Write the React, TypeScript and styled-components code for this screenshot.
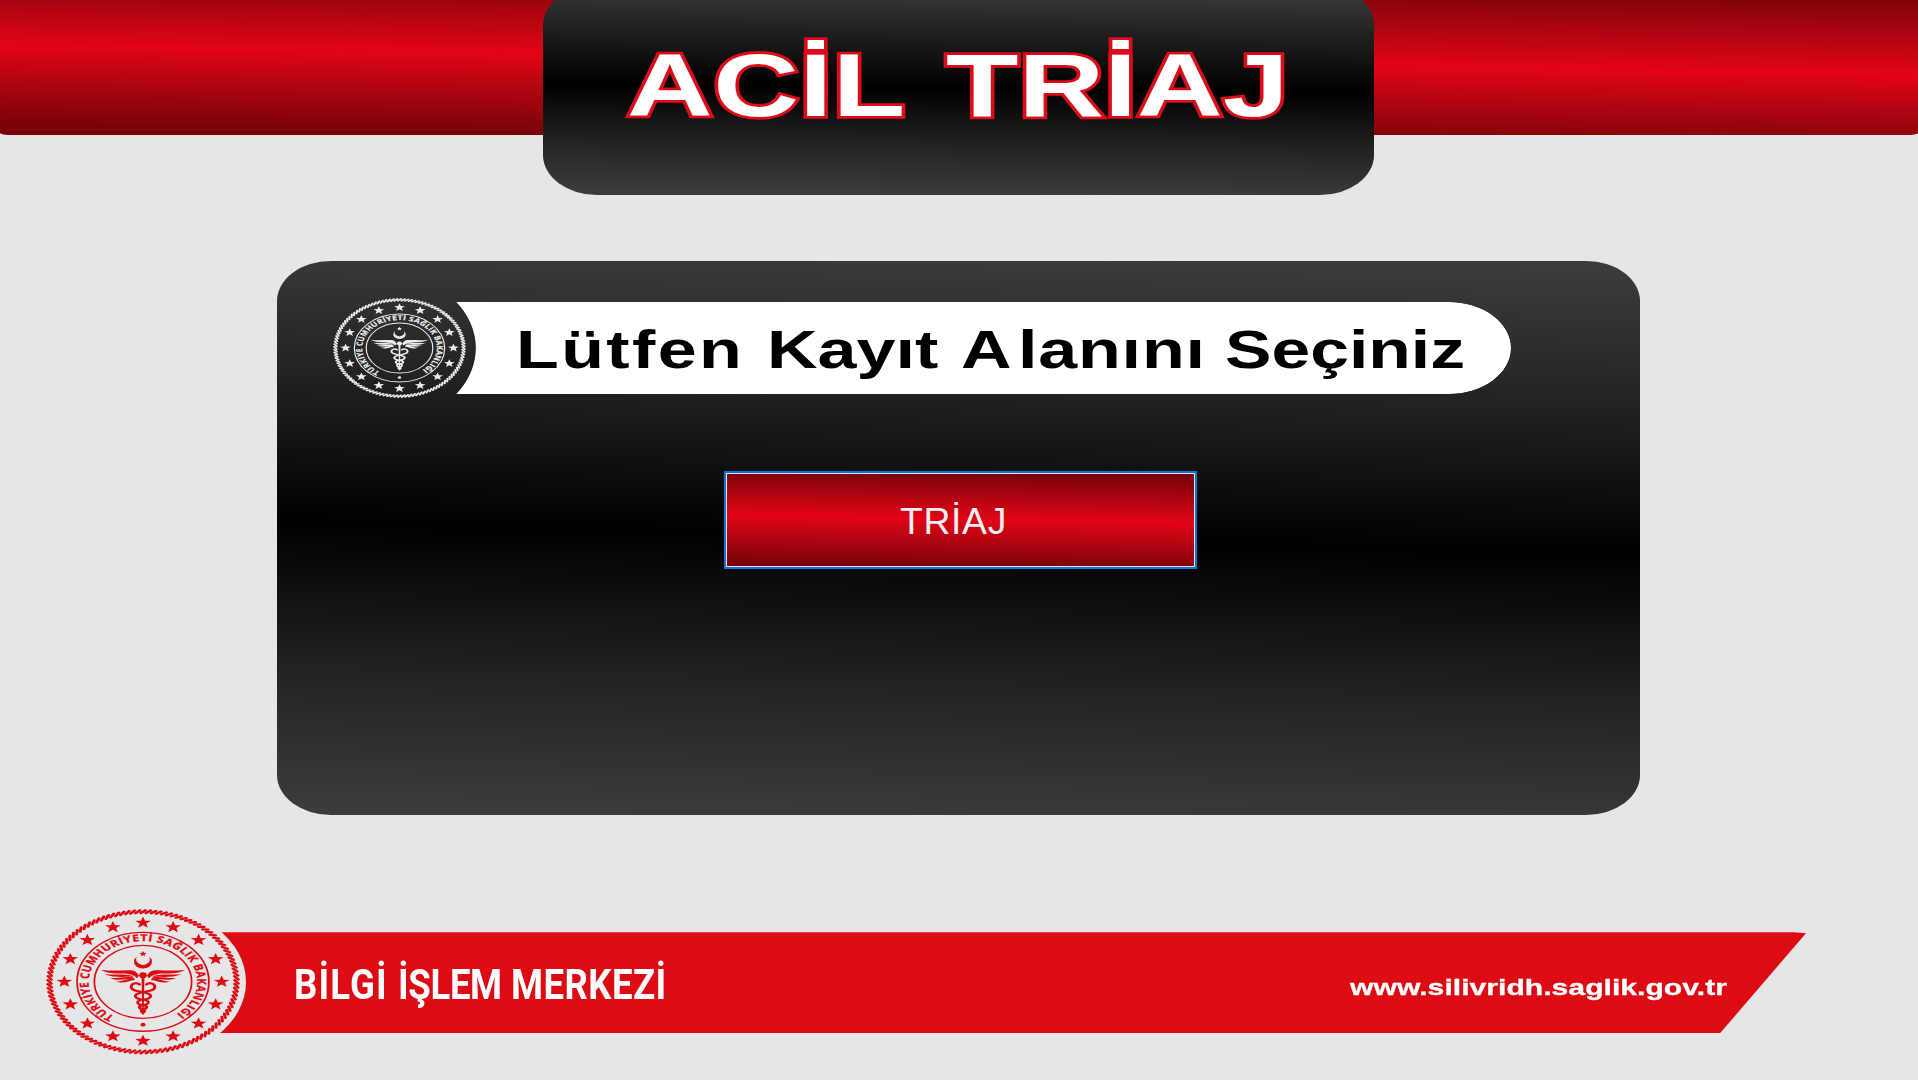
import React from "react";
import styled, { createGlobalStyle } from "styled-components";

const GlobalStyle = createGlobalStyle`
  html, body, #root { height: 100%; }
  body {
    margin: 0;
    overflow: hidden;
    background: #e6e6e6;
    font-family: "Liberation Sans", Arial, sans-serif;
  }
`;

const Screen = styled.div`
  display: flex;
  flex-direction: column;
  align-items: stretch;
  width: 1918px;
  height: 1080px;
  background: #e6e6e6;
`;

const Header = styled.header`
  display: flex;
  justify-content: center;
  align-items: flex-start;
  height: 134.5px;
  flex: none;
  padding-right: 1px;
  box-sizing: border-box;
  border-radius: 0 0 12px 12px / 0 0 2px 2px;
  background: linear-gradient(180.87deg, #7b0307 -3.5px, #ac0510 34px, #e20417 74.5px, #ac0510 113px, #7b0307 152px);
`;

const TitlePlate = styled.div`
  flex: none;
  box-sizing: border-box;
  width: 830.5px;
  height: 210px;
  margin-top: -15px;
  padding: 51px 0 0 84px;
  border-radius: 54px / 40px;
  background: linear-gradient(180.65deg, #3b3b3b 3%, #222 22%, #000 49%, #222 75%, #3b3b3b 97%);
`;

const Title = styled.h1`
  display: grid;
  grid-template-columns: 318.5px auto;
  margin: 0;
  font-size: 88.5px;
  line-height: 100px;
  font-weight: 700;
  color: #fff;
  -webkit-text-stroke: 5.6px #dc0c18;
  paint-order: stroke fill;
  stroke-linejoin: round;
`;

const Main = styled.main`
  display: flex;
  flex-direction: column;
  align-items: flex-start;
  box-sizing: border-box;
  width: 1363px;
  height: 554px;
  flex: none;
  margin: 126.5px 0 0 277px;
  padding: 37px 0 0 56.4px;
  border-radius: 54px / 40px;
  background: linear-gradient(181.4deg, #3b3b3b 2%, #222 25%, #000 50%, #222 75%, #3b3b3b 98%);
`;

const PromptRow = styled.div`
  display: flex;
  align-items: center;
  height: 100px;
`;

const PromptPill = styled.div`
  box-sizing: border-box;
  width: 1059px;
  height: 92.4px;
  margin-left: -14px;
  padding: 18.4px 0 0 64px;
  background: #fff;
  border-radius: 0 62px 62px 0 / 0 46px 46px 0;
  mask-image: radial-gradient(107px 80px at -83px 50%, transparent 99.4%, #000 100.2%);
`;

const Prompt = styled.h2`
  display: grid;
  grid-template-columns: 251px 193.5px 57px 207.5px auto;
  margin: 0;
  font-size: 53.5px;
  line-height: 60px;
  font-weight: 700;
  color: #000;
`;

const Word = styled.span<{ $stretch: number; $spacing?: number }>`
  display: block;
  width: 0;
  white-space: nowrap;
  letter-spacing: ${(p) => p.$spacing ?? 0}px;
  transform: scaleX(${(p) => p.$stretch});
  transform-origin: 0 0;
`;

const TriageButton = styled.button`
  box-sizing: border-box;
  width: 473px;
  height: 98px;
  margin: 73px 0 0 390.6px;
  padding: 1px 14px 0 0;
  border: 2px solid #0078d7;
  border-radius: 0;
  box-shadow: inset 0 0 0 1px #e8dede;
  background: linear-gradient(181deg, #7b0307 5%, #ac0510 26%, #e20417 49%, #ac0510 73%, #7b0307 95%);
  color: #f0f0f0;
  font: 400 37.33px/46px "Liberation Sans", Arial, sans-serif;
  letter-spacing: 0.7px;
  text-align: center;
`;

const Footer = styled.footer`
  display: flex;
  align-items: center;
  height: 154px;
  flex: none;
  margin: 90px 0 0 39.7px;
`;

const Seal = styled.div`
  position: relative;
  z-index: 1;
  display: flex;
  align-items: center;
  justify-content: center;
  flex: none;
  width: 206px;
  height: 154px;
  border-radius: 50%;
  background: #e6e6e6;
`;

const FooterBar = styled.div`
  display: flex;
  align-items: flex-start;
  box-sizing: border-box;
  width: 1626px;
  height: 101px;
  margin: 1.6px 0 0 -65.7px;
  padding-left: 114px;
  background: #dd0b13;
  clip-path: polygon(0 0, calc(100% - 12px) 0, 100% 1px, calc(100% - 86px) 100%, 0 100%);
`;

const Department = styled.div`
  display: grid;
  grid-template-columns: 103.5px 113px auto;
  width: 1056px;
  padding-top: 28px;
  font-family: Roboto, sans-serif;
  font-size: 42px;
  line-height: 50px;
  font-weight: 700;
  color: #fff;
`;

const Website = styled.div`
  padding-top: 41px;
  font-size: 22.5px;
  line-height: 30px;
  font-weight: 700;
  color: #fff;
  -webkit-text-stroke: 0.3px #fff;
`;

const starPoints = (r: number) =>
  Array.from({ length: 10 }, (_, i) => {
    const a = (Math.PI / 5) * i - Math.PI / 2;
    const d = i % 2 ? r * 0.42 : r;
    return `${(Math.cos(a) * d).toFixed(2)},${(Math.sin(a) * d).toFixed(2)}`;
  }).join(" ");

const ROPE_STRANDS = 112;

function Emblem({ color, width, height, id }: { color: string; width: number; height: number; id: string }) {
  return (
    <svg width={width} height={height} viewBox="-73 -73 146 146" preserveAspectRatio="none" style={{ flex: "none" }}>
      <defs>
        <path id={id} d="M -21.5 34.8 A 40.9 40.9 0 1 1 21.5 34.8" />
      </defs>
      <g fill="none" stroke={color}>
        <g strokeWidth="2.3" strokeLinecap="round">
          {Array.from({ length: ROPE_STRANDS }, (_, i) => (
            <path key={i} d="M -1.7 -69 L 1.7 -71.7" transform={`rotate(${(360 / ROPE_STRANDS) * i})`} />
          ))}
        </g>
        <circle r="49.6" strokeWidth="1.3" />
        <circle r="36.6" strokeWidth="1.3" />
      </g>
      <g fill={color}>
        {Array.from({ length: 16 }, (_, i) => {
          const a = (Math.PI / 8) * i;
          return (
            <polygon
              key={i}
              points={starPoints(6.2)}
              transform={`translate(${(Math.sin(a) * 59.2).toFixed(2)} ${(-Math.cos(a) * 59.2).toFixed(2)})`}
            />
          );
        })}
        <text
          fontFamily='"Open Sans", "Noto Sans", sans-serif'
          fontWeight="700"
          fontSize="9.4"
          stroke={color}
          strokeWidth="0.25"
        >
          <textPath href={`#${id}`} textLength="207" lengthAdjust="spacing">
            TÜRKİYE CUMHURİYETİ SAĞLIK BAKANLIĞI
          </textPath>
        </text>
        <circle cy="43" r="1.9" />
        <polygon points={starPoints(3)} transform="translate(0 -28)" />
        {/* crescent */}
        <path d="M -4.3 -25.3 A 6.8 6.8 0 1 0 4.3 -25.3 A 5.2 5.2 0 1 1 -4.3 -25.3 Z" />
        <circle cy="-6.6" r="2.9" />
        {/* wings */}
        {[1, -1].map((s) => (
          <g key={s} transform={`scale(${s} 1)`}>
            <path d="M -31.8 -12.2 C -24 -10.6 -17 -11.9 -9 -11.6 C -6 -11.4 -4.5 -9.5 -3 -6 L -4.5 -3.5 C -7 -7 -11 -8 -15 -8.2 C -22 -8.3 -28 -9 -31.8 -12.2 Z" />
            <path d="M -29 -7.8 C -23 -6.6 -15 -8.2 -9 -6.4 L -7 -4.8 C -14 -5.4 -23 -3.6 -29 -7.8 Z" />
            <path d="M -25 -3.9 C -19 -3.2 -13 -5.8 -7 -4.4 L -6.4 -3 C -12 -3.4 -19 -0.2 -25 -3.9 Z" />
            <path d="M -20.5 -0.2 C -16 -0.2 -12 -3.8 -6.6 -3 L -6 -1.8 C -11 -1.4 -14 2.6 -20.5 -0.2 Z" />
          </g>
        ))}
        <path d="M -1.1 -6 H 1.1 L 0.5 33 H -0.5 Z" />
      </g>
      {/* intertwined snakes */}
      <g fill="none" stroke={color} strokeWidth="2.2" strokeLinecap="round">
        {[1, -1].map((s) => (
          <path
            key={s}
            transform={`scale(${s} 1)`}
            d="M -2.6 2.6 C -5 0.2 -9 1.6 -8.9 5.2 C -8.8 9.6 -2 9 3 11.4 C 7.6 13.6 6.4 16.8 0 18 C -5.8 19.2 -5 22.4 0 23.4 C 4 24.2 3.6 26.6 0 27.6 C -2 28.4 -1.6 30 0 31"
          />
        ))}
      </g>
    </svg>
  );
}

export default function App() {
  return (
    <>
      <GlobalStyle />
      <Screen>
        <Header>
          <TitlePlate>
            <Title>
              <Word $stretch={1.34} $spacing={0.4}>ACİL</Word>
              <Word $stretch={1.34}>TRİAJ</Word>
            </Title>
          </TitlePlate>
        </Header>
        <Main>
          <PromptRow>
            <Emblem id="seal-text-small" color="#ececec" width={133} height={100} />
            <PromptPill>
              <Prompt>
                <Word $stretch={1.31} $spacing={1.8}>Lütfen</Word>
                <Word $stretch={1.31}>Kayıt</Word>
                <Word $stretch={1.31}>A</Word>
                <Word $stretch={1.31} $spacing={0.6}>lanını</Word>
                <Word $stretch={1.302}>Seçiniz</Word>
              </Prompt>
            </PromptPill>
          </PromptRow>
          <TriageButton type="button">TRİAJ</TriageButton>
        </Main>
        <Footer>
          <Seal>
            <Emblem id="seal-text-large" color="#dd0b13" width={194} height={145.6} />
          </Seal>
          <FooterBar>
            <Department>
              <Word $stretch={0.87} $spacing={1.3}>BİLGİ</Word>
              <Word $stretch={0.87} $spacing={-0.4}>İŞLEM</Word>
              <Word $stretch={0.87} $spacing={0.5}>MERKEZİ</Word>
            </Department>
            <Website>
              <Word $stretch={1.34}>www.silivridh.saglik.gov.tr</Word>
            </Website>
          </FooterBar>
        </Footer>
      </Screen>
    </>
  );
}
